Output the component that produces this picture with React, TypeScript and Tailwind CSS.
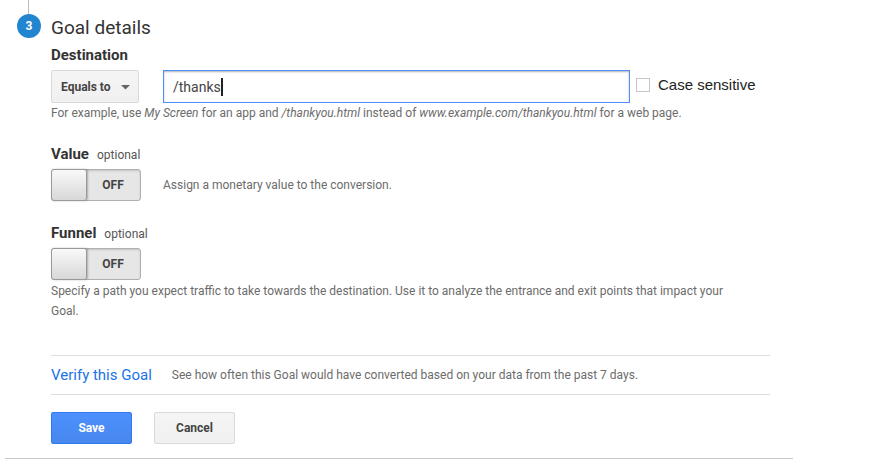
import React, { useState } from "react";

interface ToggleProps {
  id: string;
  label: string;
}

function Toggle({ id, label }: ToggleProps) {
  const [on, setOn] = useState(false);

  return (
    <div>
      <div className="flex items-baseline gap-2 h-5 leading-5">
        <label htmlFor={id} className="text-[15px] leading-5 font-bold text-[#333]">
          {label}
        </label>
        <span className="text-xs leading-5 text-[#555]">optional</span>
      </div>

      <button
        id={id}
        type="button"
        role="switch"
        aria-checked={on}
        onClick={() => setOn(!on)}
        className={`mt-[5px] flex h-8 w-[90px] items-stretch rounded-[3px] border border-[#b0b0b0] bg-[#e6e6e6] shadow-[inset_0_1px_2px_rgba(0,0,0,0.15)] ${on ? "flex-row-reverse" : ""}`}
      >
        <span className="-my-px -mx-px w-9 rounded-[3px] border border-[#999] bg-linear-to-b from-[#f9f9f9] to-[#d8d8d8] shadow-[1px_0_2px_rgba(0,0,0,0.25)]" />
        <span className="flex-1 self-center text-center text-xs font-bold text-[#444]">
          {on ? "ON" : "OFF"}
        </span>
      </button>
    </div>
  );
}

export default function App() {
  const [path, setPath] = useState("/thanks");

  return (
    <main className="ml-[5px] flex max-w-[788px] border-b border-[#c8c8c8] pr-[23px] pb-[14px] font-['Roboto',sans-serif] text-xs text-[#6c6c6c]">

      <div className="w-[46px] shrink-0 pl-3">
        <div className="flex w-6 flex-col">
          <div className="ml-[11px] h-[14px] w-px bg-[#bbb]" />
          <div className="flex size-6 items-center justify-center rounded-full bg-[#2185d0] text-xs font-bold text-white">
            3
          </div>
        </div>
      </div>

      <form className="min-w-0 flex-1 pt-4" onSubmit={(e) => e.preventDefault()}>
        <h2 className="text-[19px] leading-6 text-[#333]">Goal details</h2>

        <label htmlFor="destination" className="mt-[5px] block text-[15px] leading-5 font-bold text-[#333]">
          Destination
        </label>

        <div className="mt-[5px] flex items-center">
          <div className="relative mr-6 w-[88px] shrink-0">
            <select
              aria-label="Match type"
              className="h-[33px] w-full appearance-none rounded-xs border border-[#d9d9d9] bg-linear-to-b from-[#f5f5f5] to-[#f0f0f0] pl-[9px] text-xs font-bold text-[#444]"
            >
              <option>Equals to</option>
              <option>Begins with</option>
              <option>Regular expression</option>
            </select>
            <svg className="pointer-events-none absolute top-[15px] right-[9px]" width="9" height="5" viewBox="0 0 9 5">
              <path d="M0 0h9L4.500 4.500z" fill="#666" />
            </svg>
          </div>

          <div className="relative min-w-0 flex-1">
            <input
              id="destination"
              type="text"
              value={path}
              onChange={(e) => setPath(e.target.value)}
              className="block h-[33px] w-full border border-[#4d90fe] bg-white px-[9px] text-sm text-[#444] caret-transparent shadow-[inset_0_1px_2px_rgba(0,0,0,0.3)] outline-none"
            />
            {/* caret, sits right after the typed path */}
            <div className="pointer-events-none absolute inset-y-0 left-[10px] flex items-center text-sm">
              <span className="invisible">{path}</span>
              <span className="h-[18px] w-[2px] bg-[#222]" />
            </div>
          </div>

          <label className="ml-[6px] flex h-[30px] w-[134px] shrink-0 items-center gap-2 self-start font-['Liberation_Sans',Arial,sans-serif] text-[15px] leading-5 text-[#222]">
            <input type="checkbox" className="size-[14px] appearance-none border border-[#c6c6c6] bg-white checked:bg-[#4d90fe]" />
            Case sensitive
          </label>
        </div>

        <p className="leading-5">
          For example, use <em>My Screen</em> for an app and <em>/thankyou.html</em> instead of{" "}
          <em>www.example.com/thankyou.html</em> for a web page.
        </p>

        <div className="mt-[21px] flex items-end gap-[22px]">
          <Toggle id="value" label="Value" />
          <p className="leading-8">Assign a monetary value to the conversion.</p>
        </div>

        <div className="mt-[22px]">
          <Toggle id="funnel" label="Funnel" />
          <p className="mt-px pr-6 leading-5">
            Specify a path you expect traffic to take towards the destination. Use it to analyze the entrance and exit points that impact your Goal.
          </p>
        </div>

        <div className="mt-[34px] flex h-10 items-center gap-5 border-y border-[#ddd]">
          <a href="#verify" className="text-[15px] leading-5 text-[#1a73e8]">Verify this Goal</a>
          <span className="leading-5">
            See how often this Goal would have converted based on your data from the past 7 days.
          </span>
        </div>

        <div className="mt-[17px] flex gap-[22px]">
          <button
            type="submit"
            className="h-8 w-[81px] rounded-xs border border-[#3079ed] bg-linear-to-b from-[#4d90fe] to-[#4787ed] text-xs font-bold text-white"
          >
            Save
          </button>
          <button
            type="button"
            className="h-8 w-[81px] rounded-xs border border-[#d9d9d9] bg-linear-to-b from-[#f5f5f5] to-[#f0f0f0] text-xs font-bold text-[#444]"
          >
            Cancel
          </button>
        </div>
      </form>

    </main>
  );
}
